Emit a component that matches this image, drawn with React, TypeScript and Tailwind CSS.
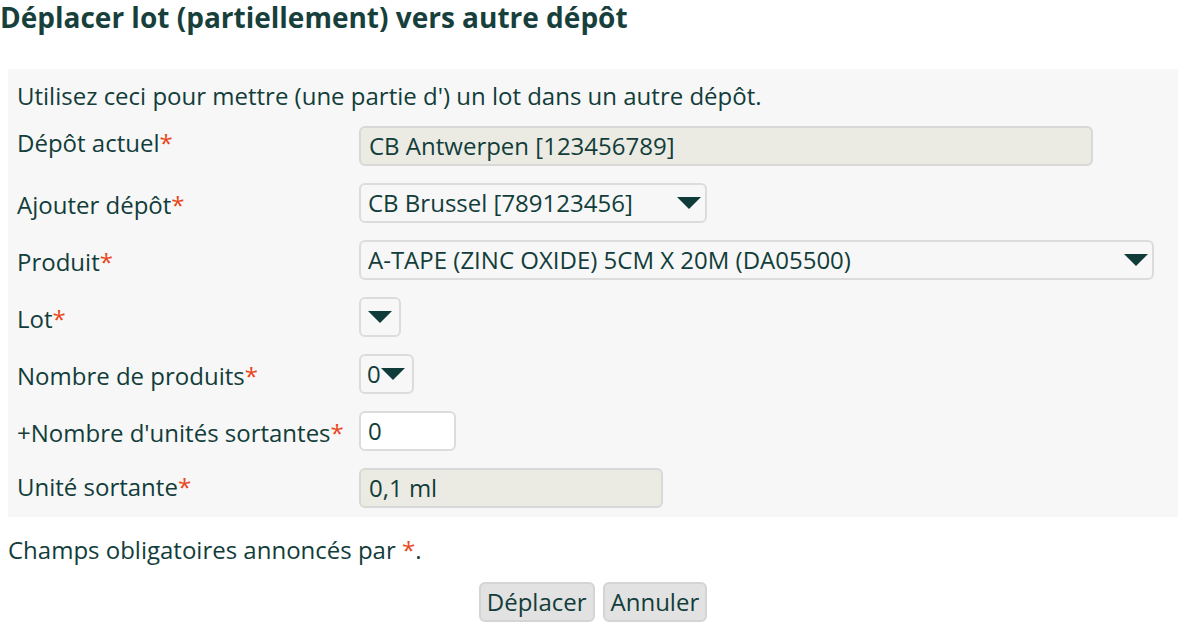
import React from "react";

// ── Formulaire : déplacer un lot vers un autre dépôt ──────────────────────

const Req = () => <span className="text-[#e8461b]">*</span>;

function Arrow() {
  return (
    <svg width="24" height="12" viewBox="0 0 24 12" className="shrink-0">
      <path d="M0 0 H24 L12 12 Z" fill="#0f3b38" />
    </svg>
  );
}

function Field({ label, offset = "mt-[3px]", children }: { label: string; offset?: string; children: React.ReactNode }) {
  return (
    <div className="flex items-center h-10">
      <div className={`w-[342px] shrink-0 whitespace-nowrap ${offset}`}>
        {label}
        <Req />
      </div>
      {children}
    </div>
  );
}

function ReadOnly({ value, className }: { value: string; className: string }) {
  return (
    <div
      className={`h-10 flex items-center px-[8px] rounded-md border-2 border-[#d8d8d6] bg-[#ebebe4] ${className}`}
    >
      {value}
    </div>
  );
}

function Select({ value, className }: { value: string; className: string }) {
  return (
    <div
      className={`h-10 flex items-center justify-between pl-[7px] pr-[4px] rounded-md border-2 border-[#dcdcdc] bg-[#f7f7f7] ${className}`}
    >
      <span>{value}</span>
      <Arrow />
    </div>
  );
}

export default function App() {
  return (
    <div
      className="w-[1186px] h-[631px] bg-white text-[#123d3a] text-[24px] leading-[32px]"
      style={{ fontFamily: '"Open Sans", "Noto Sans", sans-serif' }}
    >
      <h1 className="text-[28px] font-bold leading-[34px] text-[#173f3c]">
        Déplacer lot (partiellement) vers autre dépôt
      </h1>

      {/* panneau gris */}
      <div className="mt-[35px] mx-[8px] bg-[#f7f7f7] pl-[9px] pt-[11px] pb-[9px] flex flex-col gap-[17px]">
        <p className="-mb-[3px]">Utilisez ceci pour mettre (une partie d') un lot dans un autre dépôt.</p>
        <Field label="Dépôt actuel" offset="-mt-[6px]">
          <ReadOnly value="CB Antwerpen [123456789]" className="w-[734px]" />
        </Field>
        <Field label="Ajouter dépôt">
          <Select value="CB Brussel [789123456]" className="w-[348px]" />
        </Field>
        <Field label="Produit">
          <Select value="A-TAPE (ZINC OXIDE) 5CM X 20M (DA05500)" className="w-[795px]" />
        </Field>
        <Field label="Lot">
          <div className="h-10 w-[42px] flex items-center justify-center rounded-md border-2 border-[#dcdcdc] bg-[#f7f7f7]">
            <Arrow />
          </div>
        </Field>
        <Field label="Nombre de produits">
          <div className="h-10 w-[55px] flex items-center pl-[6px] rounded-md border-2 border-[#dcdcdc] bg-[#f7f7f7]">
            <span>0</span>
            <Arrow />
          </div>
        </Field>
        <Field label="+Nombre d'unités sortantes">
          <div className="h-10 w-[97px] flex items-center px-[7px] rounded-md border-2 border-[#dcdcdc] bg-white">
            0
          </div>
        </Field>
        <Field label="Unité sortante" offset="-mt-[3px]">
          <ReadOnly value="0,1 ml" className="w-[304px]" />
        </Field>
      </div>

      <p className="mt-[17px] ml-[8px]">
        Champs obligatoires annoncés par <Req />.
      </p>

      <div className="mt-[16px] flex justify-center gap-[8px]">
        <button className="h-10 px-[6px] rounded-md border-2 border-[#d4d4d4] bg-[#e2e2e2]">Déplacer</button>
        <button className="h-10 px-[6px] rounded-md border-2 border-[#d4d4d4] bg-[#e2e2e2]">Annuler</button>
      </div>
    </div>
  );
}
